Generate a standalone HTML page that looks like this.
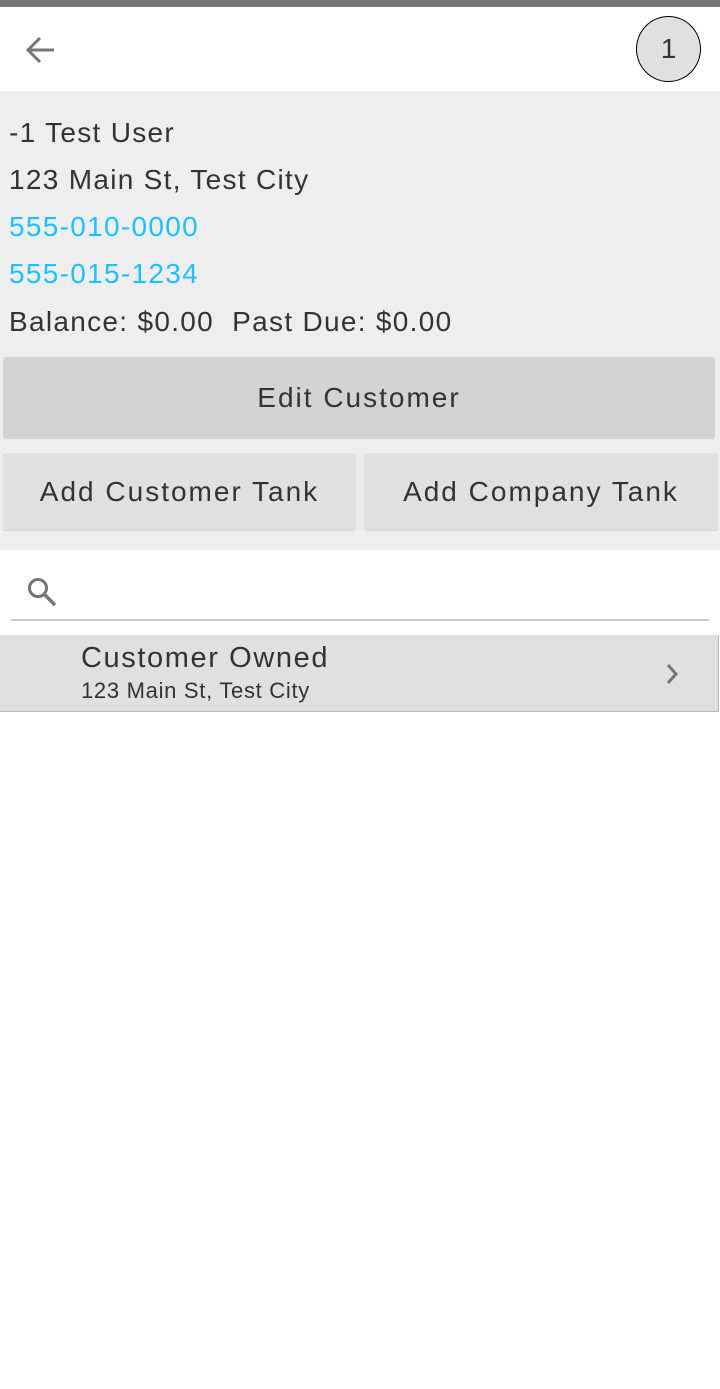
<!DOCTYPE html>
<html><head><meta charset="utf-8"><style>
*{margin:0;padding:0;box-sizing:border-box}
body{width:720px;height:1389px;background:#fff;font-family:"Liberation Sans",sans-serif;color:#333;position:relative;overflow:hidden}
.abs{position:absolute}
.t{position:absolute;left:9px;font-size:28px;line-height:32px;letter-spacing:1.3px;white-space:nowrap}
.btn{position:absolute;border-radius:3px;font-size:28px;color:#333;display:flex;align-items:center;justify-content:center;letter-spacing:2px;white-space:nowrap;box-shadow:0 1px 1px rgba(0,0,0,.12)}
</style></head><body>
<div class="abs" style="left:0;top:0;width:720px;height:7px;background:#757575"></div>
<svg class="abs" style="left:24px;top:34px" width="34" height="32" viewBox="0 0 34 32"><path d="M30 16H5M16 4L4 16l12 12" stroke="#757575" stroke-width="3" fill="none"/></svg>
<div class="abs" style="left:636px;top:16px;width:65px;height:66px;border:1.5px solid #000;border-radius:50%;background:#e0e0e0;font-size:28px;display:flex;align-items:center;justify-content:center;color:#333">1</div>
<div class="abs" style="left:0;top:91px;width:720px;height:459px;background:#eeeeee"></div>
<div class="t" style="top:117px">-1 Test User</div>
<div class="t" style="top:164px">123 Main St, Test City</div>
<div class="t" style="top:211px;color:#1ec0ff">555-010-0000</div>
<div class="t" style="top:258px;color:#1ec0ff">555-015-1234</div>
<div class="t" style="top:306px">Balance: $0.00&nbsp; Past Due: $0.00</div>
<div class="btn" style="left:3px;top:357px;width:712px;height:81px;background:#d3d3d3">Edit Customer</div>
<div class="btn" style="left:3px;top:453px;width:353px;height:77px;background:#e0e0e0">Add Customer Tank</div>
<div class="btn" style="left:364px;top:453px;width:354px;height:77px;background:#e0e0e0">Add Company Tank</div>
<svg class="abs" style="left:26px;top:576px" width="32" height="32" viewBox="0 0 32 32"><circle cx="12" cy="12" r="8.5" stroke="#757575" stroke-width="3" fill="none"/><path d="M18 18l11 11" stroke="#757575" stroke-width="3.5"/></svg>
<div class="abs" style="left:11px;top:619px;width:698px;height:2px;background:#ccc"></div>
<div class="abs" style="left:0;top:635px;width:719px;height:77px;background:#e0e0e0;border-bottom:1px solid #bbb;border-right:1px solid #bbb"></div>
<div class="abs" style="left:81px;top:641px;font-size:29px;line-height:34px;letter-spacing:1.6px;white-space:nowrap">Customer Owned</div>
<div class="abs" style="left:81px;top:677px;font-size:22px;line-height:28px;letter-spacing:0.7px;white-space:nowrap">123 Main St, Test City</div>
<svg class="abs" style="left:664px;top:662px" width="16" height="24" viewBox="0 0 16 24"><path d="M4 3l8 9-8 9" stroke="#757575" stroke-width="3" fill="none"/></svg>
</body></html>
